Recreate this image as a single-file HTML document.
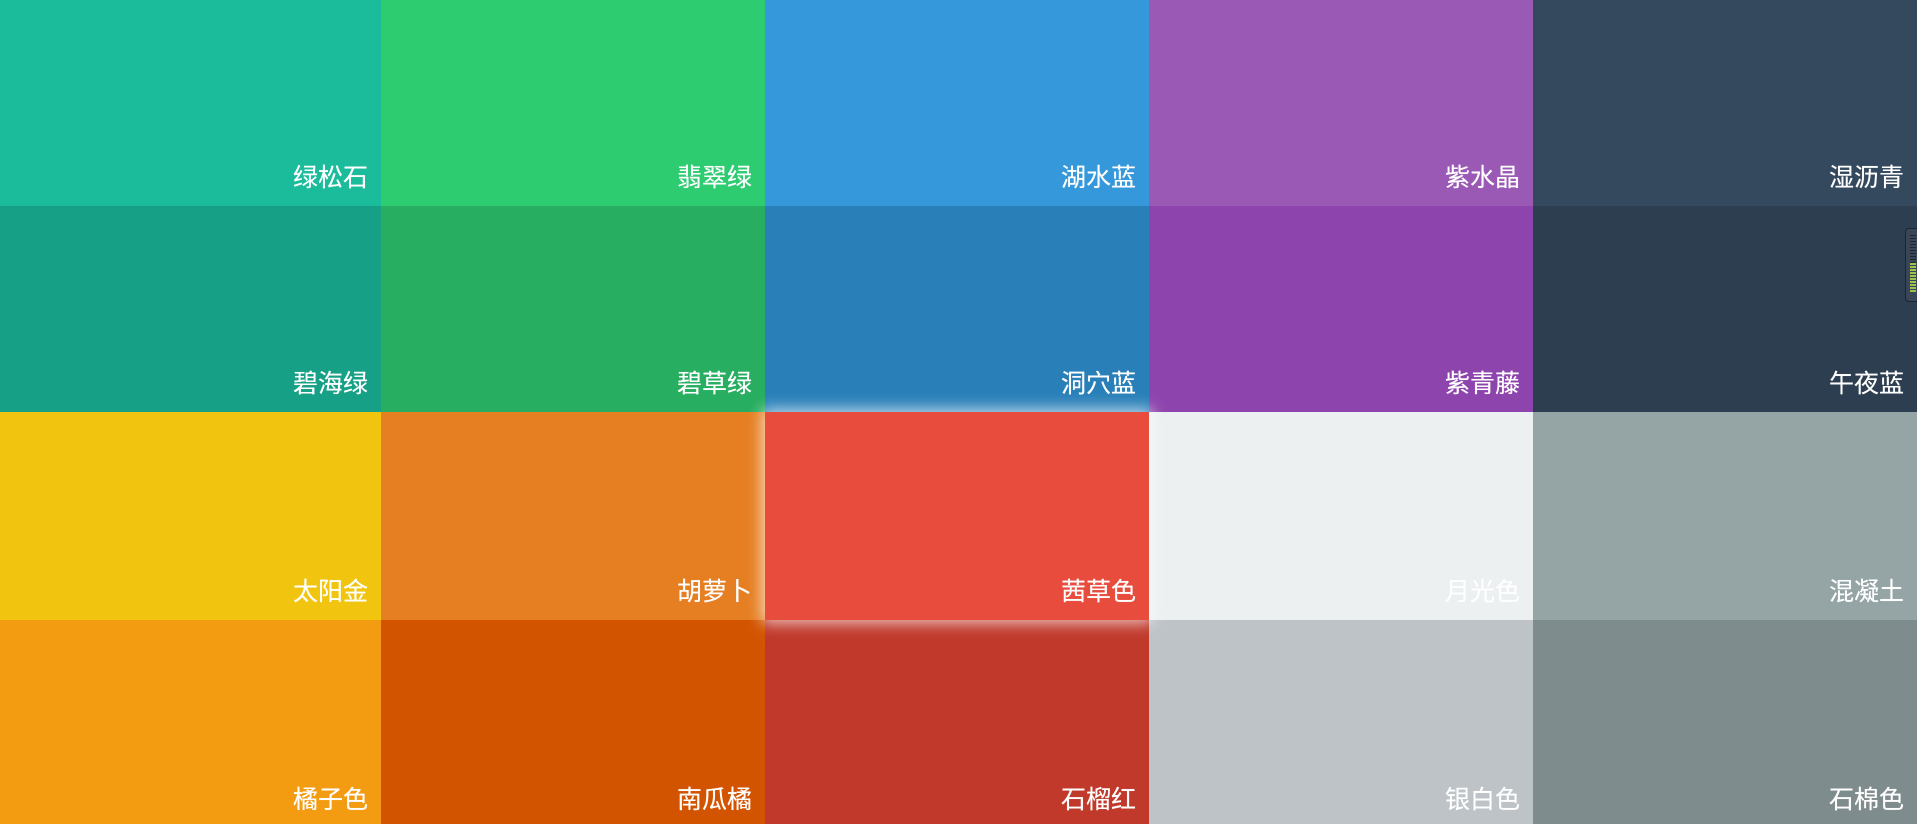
<!DOCTYPE html>
<html><head><meta charset="utf-8"><style>
html,body{margin:0;padding:0;width:1917px;height:824px;overflow:hidden;background:#2c3e50}
.g{position:relative;width:1917px;height:824px}
.c{position:absolute;box-sizing:border-box}
.c span{position:absolute;right:13px;bottom:15px;color:#fff;font:25px "Liberation Sans","Noto Sans CJK SC",sans-serif;line-height:25px;text-shadow:0 0 0.4px #fff}
.r4 span{bottom:11px}
</style></head><body><div class="g">
<div class="c" style="left:0;top:0;width:381px;height:206px;background:#1abc9c"><span>绿松石</span></div>
<div class="c" style="left:381px;top:0;width:384px;height:206px;background:#2ecc71"><span>翡翠绿</span></div>
<div class="c" style="left:765px;top:0;width:384px;height:206px;background:#3498db"><span>湖水蓝</span></div>
<div class="c" style="left:1149px;top:0;width:384px;height:206px;background:#9b59b6"><span>紫水晶</span></div>
<div class="c" style="left:1533px;top:0;width:384px;height:206px;background:#34495e"><span>湿沥青</span></div>

<div class="c" style="left:0;top:206px;width:381px;height:206px;background:#16a085"><span>碧海绿</span></div>
<div class="c" style="left:381px;top:206px;width:384px;height:206px;background:#27ae60"><span>碧草绿</span></div>
<div class="c" style="left:765px;top:206px;width:384px;height:206px;background:#2980b9"><span>洞穴蓝</span></div>
<div class="c" style="left:1149px;top:206px;width:384px;height:206px;background:#8e44ad"><span>紫青藤</span></div>
<div class="c" style="left:1533px;top:206px;width:384px;height:206px;background:#2c3e50"><span>午夜蓝</span></div>

<div class="c" style="left:0;top:412px;width:381px;height:208px;background:#f1c40f"><span>太阳金</span></div>
<div class="c" style="left:381px;top:412px;width:384px;height:208px;background:#e67e22"><span>胡萝卜</span></div>
<div class="c" style="left:1149px;top:412px;width:384px;height:208px;background:#ecf0f1"><span>月光色</span></div>
<div class="c" style="left:1533px;top:412px;width:384px;height:208px;background:#95a5a6"><span>混凝土</span></div>

<div class="c r4" style="left:0;top:620px;width:381px;height:204px;background:#f39c12"><span>橘子色</span></div>
<div class="c r4" style="left:381px;top:620px;width:384px;height:204px;background:#d35400"><span>南瓜橘</span></div>
<div class="c r4" style="left:765px;top:620px;width:384px;height:204px;background:#c0392b"><span>石榴红</span></div>
<div class="c r4" style="left:1149px;top:620px;width:384px;height:204px;background:#bdc3c7"><span>银白色</span></div>
<div class="c r4" style="left:1533px;top:620px;width:384px;height:204px;background:#7f8c8d"><span>石棉色</span></div>

<div class="c" style="left:765px;top:412px;width:384px;height:208px;background:#e74c3c;box-shadow:0 0 14px 3px rgba(255,255,255,.7);z-index:2"><span>茜草色</span></div>

<div style="position:absolute;left:1905px;top:228px;width:14px;height:72px;background:#3a4658;border:1px solid #1c2530;border-radius:4px;z-index:3">
<div style="position:absolute;left:4px;top:6px;width:6px;height:28px;background:repeating-linear-gradient(#1e2833 0 1px,#3a4658 1px 3px)"></div>
<div style="position:absolute;left:4px;top:34px;width:6px;height:30px;background:repeating-linear-gradient(#9cc44a 0 2px,#3a4658 2px 3px)"></div>
</div>
</div></body></html>
